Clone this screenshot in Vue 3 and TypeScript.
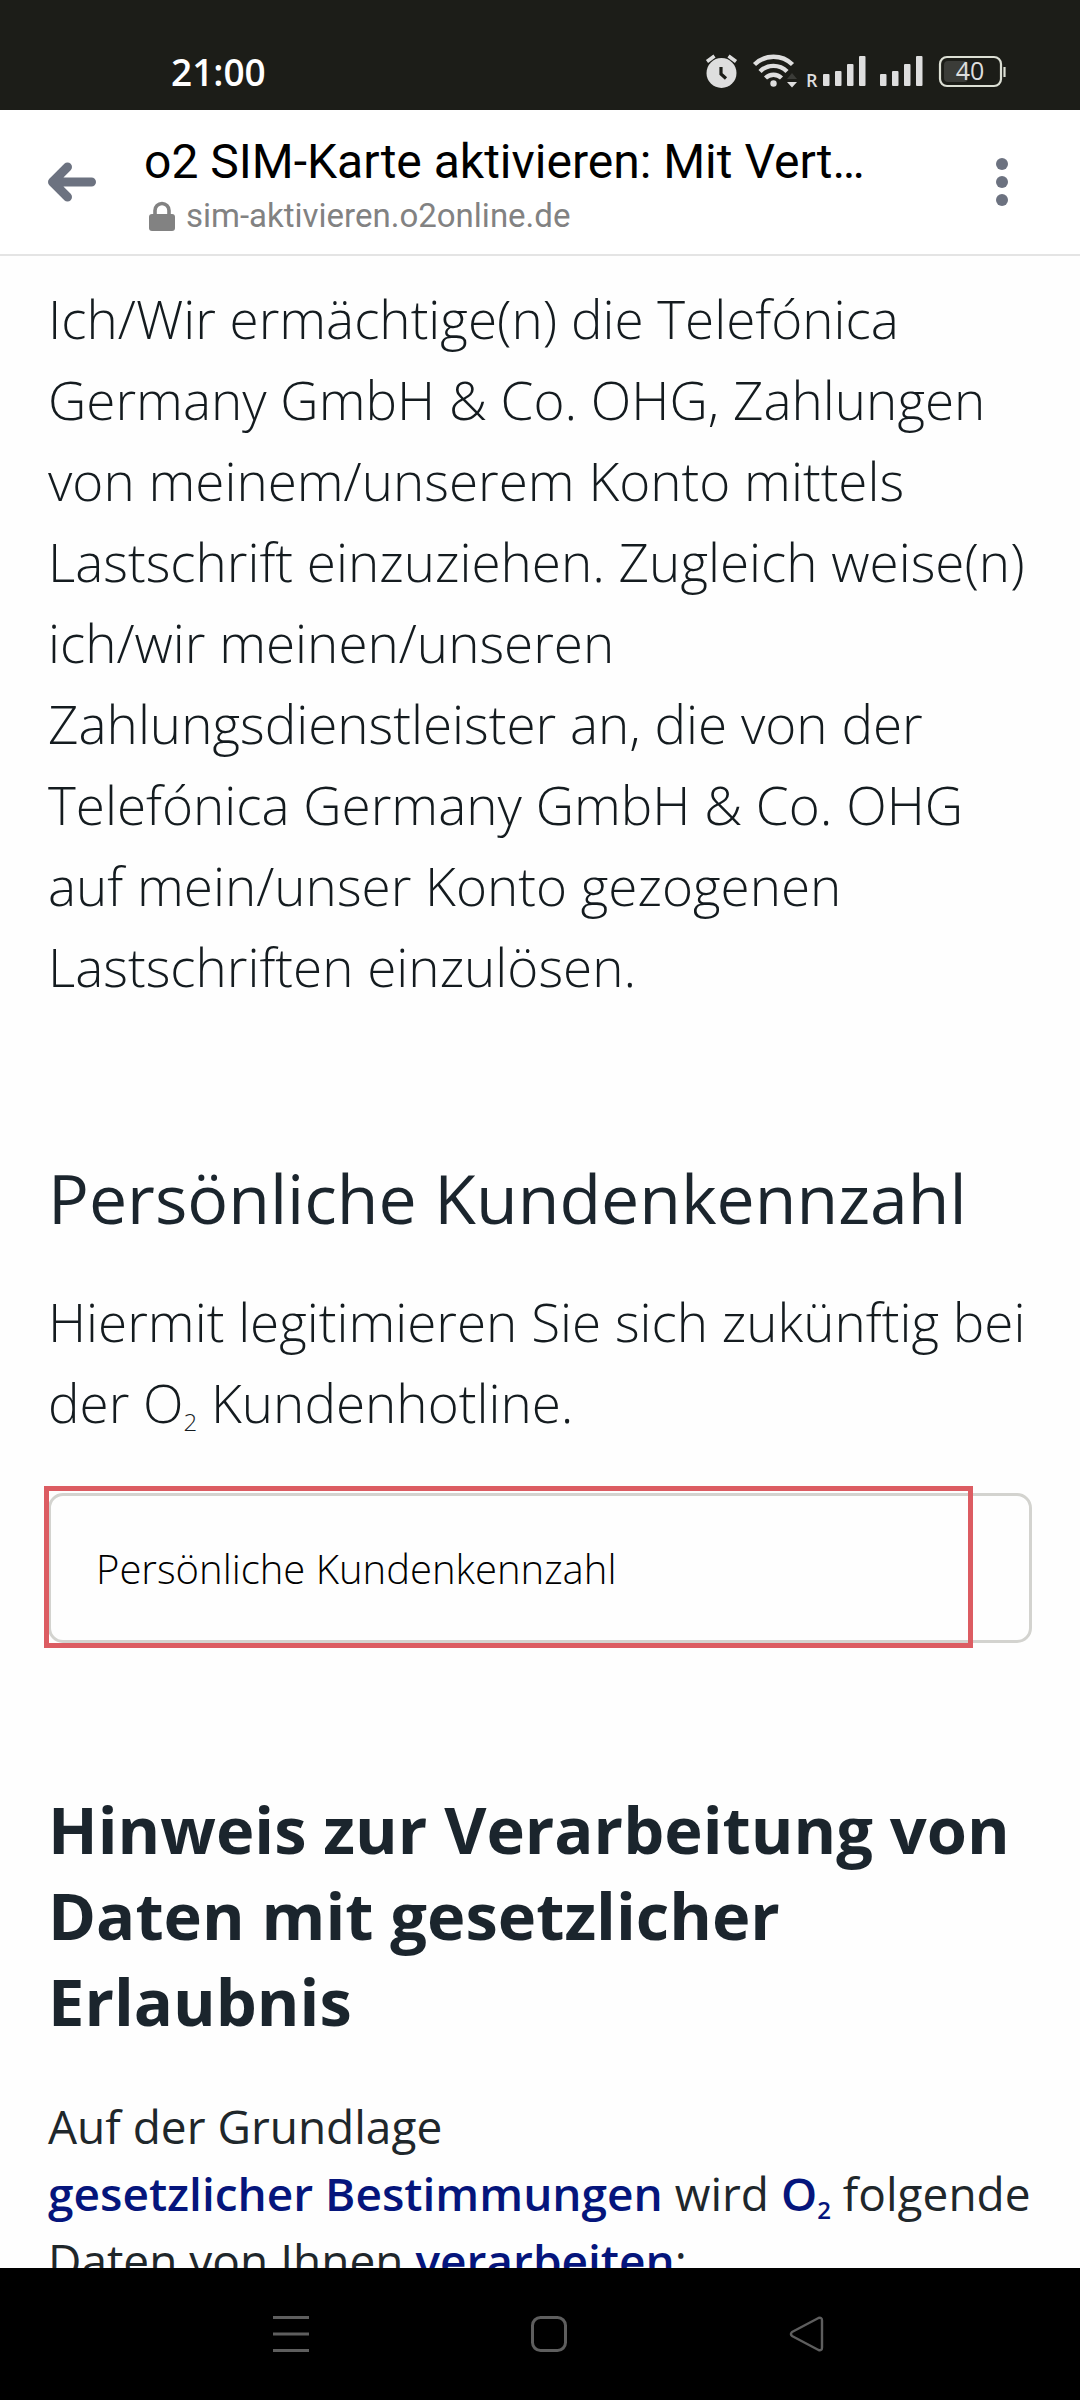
<script setup lang="ts">
import { ref } from 'vue'

const pageTitle = 'o2 SIM-Karte aktivieren: Mit Vert…'
const pageHost = 'sim-aktivieren.o2online.de'
const customerCode = ref('')
</script>

<template>
  <div class="screen">
    <div class="status">
      <time class="clock">21:00</time>
      <div class="indicators">
        <svg class="indicator" width="302" height="36" viewBox="0 0 302 36" aria-hidden="true">
          <g fill="#dedede">
            <circle cx="16.5" cy="19" r="15" />
            <path d="M2 7.500 9.500 2M23.500 2 31 7.500" stroke="#dedede" stroke-width="3.600" />
            <path d="M16 13v7l5 4.500" fill="none" stroke="#1c1d18" stroke-width="3.200" />
          </g>
          <g fill="none" stroke="#dedede" stroke-width="4.400">
            <path d="M49.500 10.500a27 27 0 0 1 38 0" />
            <path d="M55 17.500a19 19 0 0 1 27 0" />
            <path d="M60.500 24a11.500 11.500 0 0 1 16 0" />
          </g>
          <circle cx="68.500" cy="29.500" r="3.200" fill="#dedede" />
          <path d="m82 25 5-6 5 6z" fill="#3b3c38" />
          <path d="m82 28 5 5.500 5-5.500z" fill="#dedede" />
          <text class="roaming" x="101" y="33">R</text>
          <g fill="#dedede">
            <rect x="118" y="20" width="6.500" height="12" rx="1" />
            <rect x="130" y="17" width="6.500" height="15" rx="1" />
            <rect x="142" y="10" width="6.500" height="22" rx="1" />
            <rect x="154" y="2" width="6.500" height="30" rx="1" />
            <rect x="175" y="20" width="6.500" height="12" rx="1" />
            <rect x="187" y="17" width="6.500" height="15" rx="1" />
            <rect x="199" y="10" width="6.500" height="22" rx="1" />
            <rect x="211" y="2" width="6.500" height="30" rx="1" />
          </g>
          <rect x="239" y="7" width="24" height="21" rx="4" fill="#3b3c38" />
          <rect x="235" y="3" width="61" height="29" rx="7" fill="none" stroke="#dcdfd4" stroke-width="2.200" />
          <path d="M299.500 13v10" stroke="#dcdfd4" stroke-width="2.200" />
          <text class="charge" x="265" y="26" text-anchor="middle">40</text>
        </svg>
      </div>
    </div>

    <header class="bar">
      <button class="icon-button" type="button" aria-label="Zurück">
        <svg width="48" height="40" viewBox="0 0 48 40">
          <path d="M19.500 5 4.500 20l15 15M5 20h38.500" fill="none" stroke="#6c7280" stroke-width="9" stroke-linecap="round" stroke-linejoin="round" />
        </svg>
      </button>
      <div class="address">
        <div class="title">{{ pageTitle }}</div>
        <div class="host">
          <svg width="26" height="30" viewBox="0 0 26 30" aria-hidden="true">
            <rect y="13" width="26" height="17" rx="3" fill="#828282" />
            <path d="M6 15V9.500a7 7 0 0 1 14 0V15" fill="none" stroke="#828282" stroke-width="3.600" />
          </svg>
          <span>{{ pageHost }}</span>
        </div>
      </div>
      <button class="icon-button" type="button" aria-label="Menü">
        <svg width="12" height="48" viewBox="0 0 12 48" fill="#6c7280">
          <circle cx="6" cy="6" r="6" />
          <circle cx="6" cy="24" r="6" />
          <circle cx="6" cy="42" r="6" />
        </svg>
      </button>
    </header>

    <main class="content">
      <p class="lead">
        Ich/Wir ermächtige(n) die Telefónica Germany GmbH &amp; Co. OHG, Zahlungen von
        meinem/unserem Konto mittels Lastschrift einzuziehen. Zugleich weise(n) ich/wir
        meinen/unseren Zahlungsdienstleister an, die von der Telefónica Germany GmbH &amp; Co. OHG
        auf mein/unser Konto gezogenen Lastschriften einzulösen.
      </p>

      <h2 class="heading code-heading">Persönliche Kundenkennzahl</h2>
      <p class="lead">
        Hiermit legitimieren Sie sich zukünftig bei der O<sub>2</sub> Kundenhotline.
      </p>

      <div class="field">
        <input id="customer-code" v-model="customerCode" type="text" />
        <label for="customer-code">Persönliche Kundenkennzahl</label>
        <div class="marker"></div>
      </div>

      <h2 class="heading notice-heading">Hinweis zur Verarbeitung von Daten mit gesetzlicher Erlaubnis</h2>
      <p class="notice">
        Auf der Grundlage <a href="#bestimmungen">gesetzlicher Bestimmungen</a> wird
        <strong>O<sub>2</sub></strong> folgende Daten von Ihnen <a href="#verarbeiten">verarbeiten</a>:
      </p>
    </main>

    <nav class="system">
      <button type="button" aria-label="Letzte Apps">
        <svg width="36" height="36" viewBox="0 0 36 36">
          <path d="M0 1.500h36M0 18h36M0 34.500h36" stroke="#5e5e5e" stroke-width="3" />
        </svg>
      </button>
      <button type="button" aria-label="Startbildschirm">
        <svg width="36" height="36" viewBox="0 0 36 36">
          <rect x="1.500" y="1.500" width="33" height="33" rx="8" fill="none" stroke="#5e5e5e" stroke-width="3" />
        </svg>
      </button>
      <button type="button" aria-label="Zurück">
        <svg width="36" height="36" viewBox="0 0 36 36">
          <path d="M29.500 2 3 16q-2 2 0 4l26.500 14q3.500 1 3.500-2.500v-27Q33 1 29.500 2z" fill="none" stroke="#5e5e5e" stroke-width="2.400" stroke-linejoin="round" />
        </svg>
      </button>
    </nav>
  </div>
</template>

<style>
body {
  margin: 0;
  background: #fefefe;
}
</style>

<style scoped>
.screen {
  display: flex;
  flex-direction: column;
  height: 100vh;
  overflow: hidden;
  background: #fefefe;
  font-family: "Open Sans", "Noto Sans", sans-serif;
  color: #1f272b;
}

.status {
  display: flex;
  flex: none;
  align-items: flex-end;
  justify-content: space-between;
  box-sizing: border-box;
  height: 110px;
  padding: 0 73px 20px 171px;
  background: #1c1d18;
  color: #fff;
}

.clock {
  font-size: 37px;
  font-weight: 600;
  line-height: 36px;
}

.indicator {
  display: block;
}

.roaming {
  fill: #dedede;
  font-size: 18px;
  font-weight: 600;
}

.charge {
  fill: #dedede;
  font-size: 25px;
  font-weight: 500;
}

.bar {
  display: flex;
  flex: none;
  align-items: center;
  box-sizing: border-box;
  height: 146px;
  padding: 0 72px 0 48px;
  border-bottom: 2px solid #e4e4e4;
  background: #fff;
  font-family: Roboto, sans-serif;
}

.icon-button {
  display: flex;
  flex: none;
  padding: 0;
  border: 0;
  background: none;
}

.address {
  display: flex;
  flex: 1;
  flex-direction: column;
  gap: 6px;
  min-width: 0;
  margin-left: 48px;
  padding-top: 6px;
}

.title {
  overflow: hidden;
  color: #000;
  font-size: 48px;
  line-height: 56px;
  white-space: nowrap;
}

.host {
  display: flex;
  align-items: center;
  gap: 11px;
  margin-left: 5px;
  color: #828282;
  font-size: 33px;
  line-height: 40px;
}

.content {
  flex: 1;
  min-height: 0;
  overflow: hidden;
  padding: 22px 48px 0;
}

.lead {
  margin: 0;
  color: #141b1f;
  font-size: 53px;
  font-weight: 300;
  line-height: 81px;
}

.heading {
  margin: 0;
  color: #1b252d;
  line-height: 86px;
}

.code-heading {
  margin: 148px 0 40px;
  font-size: 68px;
  font-weight: 500;
}

.notice-heading {
  margin: 143px 0 49px;
  font-size: 65px;
  font-weight: 700;
}

sub {
  font-size: 24px;
  line-height: 0;
  vertical-align: -8px;
}

.field {
  position: relative;
  margin-top: 50px;
}

.field input {
  display: block;
  box-sizing: border-box;
  width: 100%;
  height: 150px;
  padding: 0 48px;
  border: 3px solid #d3d3cf;
  border-radius: 15px;
  outline: 0;
  background: #fefefe;
  font: 300 40px "Open Sans", "Noto Sans", sans-serif;
}

.field label {
  position: absolute;
  top: 0;
  left: 48px;
  color: #000;
  font-size: 40px;
  font-weight: 300;
  line-height: 152px;
}

.marker {
  position: absolute;
  inset: -7px 59px -5px -4px;
  border: 5px solid #dc5c62;
  pointer-events: none;
}

.notice {
  margin: 0;
  font-size: 46px;
  line-height: 67px;
}

.notice a,
.notice strong {
  color: #05157c;
  font-weight: 600;
  text-decoration: none;
  white-space: nowrap;
}

.system {
  display: flex;
  flex: none;
  align-items: center;
  justify-content: space-around;
  height: 132px;
  padding: 0 144px 0 162px;
  background: #000;
}

.system button {
  display: flex;
  padding: 0;
  border: 0;
  background: none;
}
</style>
